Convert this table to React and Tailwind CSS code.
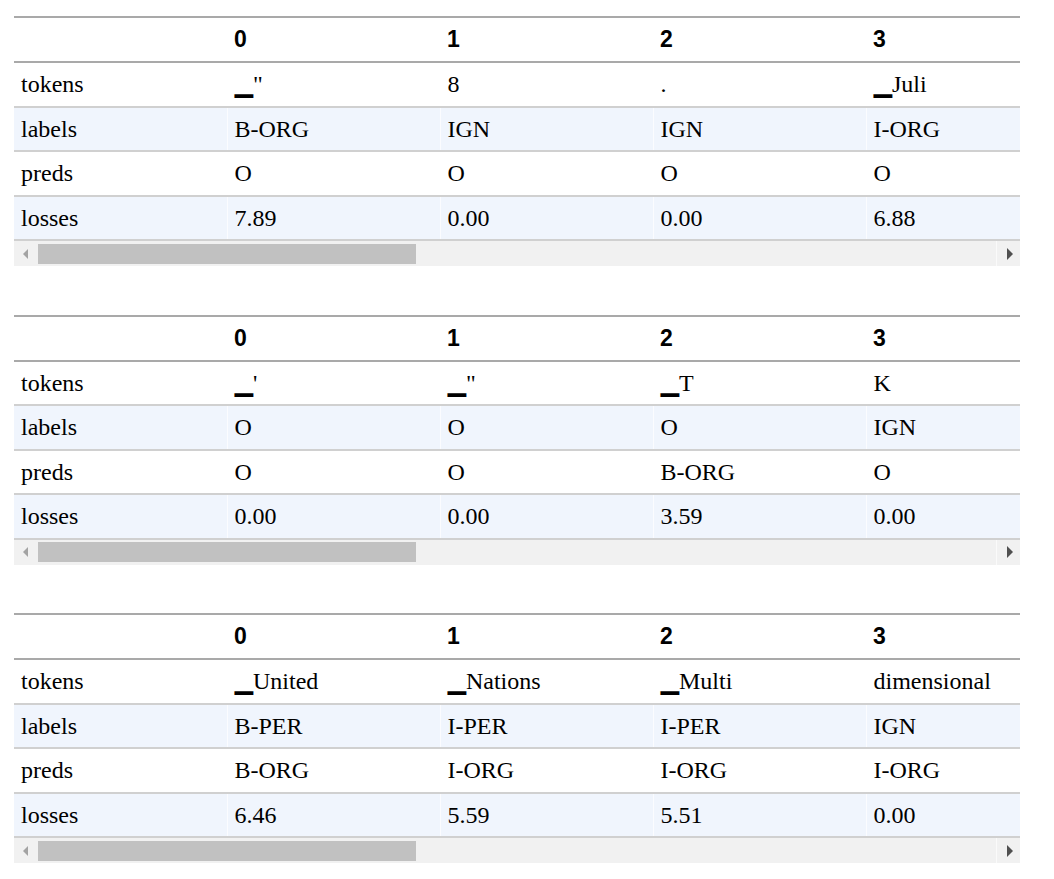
const tables = [
  {
    tokens: ["▁\"", "8", ".", "▁Juli"],
    labels: ["B-ORG", "IGN", "IGN", "I-ORG"],
    preds: ["O", "O", "O", "O"],
    losses: ["7.89", "0.00", "0.00", "6.88"],
  },
  {
    tokens: ["▁'", "▁\"", "▁T", "K"],
    labels: ["O", "O", "O", "IGN"],
    preds: ["O", "O", "B-ORG", "O"],
    losses: ["0.00", "0.00", "3.59", "0.00"],
  },
  {
    tokens: ["▁United", "▁Nations", "▁Multi", "dimensional"],
    labels: ["B-PER", "I-PER", "I-PER", "IGN"],
    preds: ["B-ORG", "I-ORG", "I-ORG", "I-ORG"],
    losses: ["6.46", "5.59", "5.51", "0.00"],
  },
];

const rows = ["tokens", "labels", "preds", "losses"];

const ScrollBar = () => (
  <div className="flex h-[25px] bg-[#f1f1f1]">
    {/* left button */}
    <div className="w-[24px] flex items-center justify-center">
      <div className="w-0 h-0 border-y-[5px] border-y-transparent border-r-[5px] border-r-[#a3a3a3] ml-[-2px]" />
    </div>
    <div className="flex-1 flex items-center">
      <div className="w-[378px] h-[20px] bg-[#c1c1c1]" />
    </div>
    {/* right button */}
    <div className="w-[24px] flex items-center justify-center border-l border-[#fafafa]">
      <div className="w-0 h-0 border-y-[6px] border-y-transparent border-l-[6px] border-l-[#505050] mr-[-2px]" />
    </div>
  </div>
);

const Frame = ({ data }) => (
  <div className="w-[1006px]">
    <div className="overflow-hidden">
      <table className="border-collapse table-fixed w-[1065px] text-black">
        <thead>
          <tr className="h-[45px] border-t-2 border-b-2 border-[#a9a9a9]">
            <th className="w-[213px]" />
            {[0, 1, 2, 3].map((i) => (
              <th
                key={i}
                className="w-[213px] px-[7px] text-left font-bold text-[23px] font-['Liberation_Sans',Arial,sans-serif]"
              >
                {i}
              </th>
            ))}
          </tr>
        </thead>
        <tbody className="font-['Liberation_Serif','DejaVu_Sans',serif] text-[24px]">
          {rows.map((r, ri) => (
            <tr
              key={r}
              className={
                "h-[44.5px] leading-none border-b-2 border-[#d0d0d0] " +
                (ri % 2 === 1 ? "bg-[#f0f5fd]" : "bg-white")
              }
            >
              <td className="px-[7px] border-r border-white/70">{r}</td>
              {data[r].map((v, i) => (
                <td key={i} className="px-[7px] border-r border-white/70 whitespace-nowrap">
                  {v}
                </td>
              ))}
            </tr>
          ))}
        </tbody>
      </table>
    </div>
    <ScrollBar />
  </div>
);

export default function App() {
  return (
    <div className="bg-white min-h-screen pt-[16px] pl-[14px] flex flex-col gap-[48.5px]">
      {tables.map((t, i) => (
        <Frame key={i} data={t} />
      ))}
    </div>
  );
}
